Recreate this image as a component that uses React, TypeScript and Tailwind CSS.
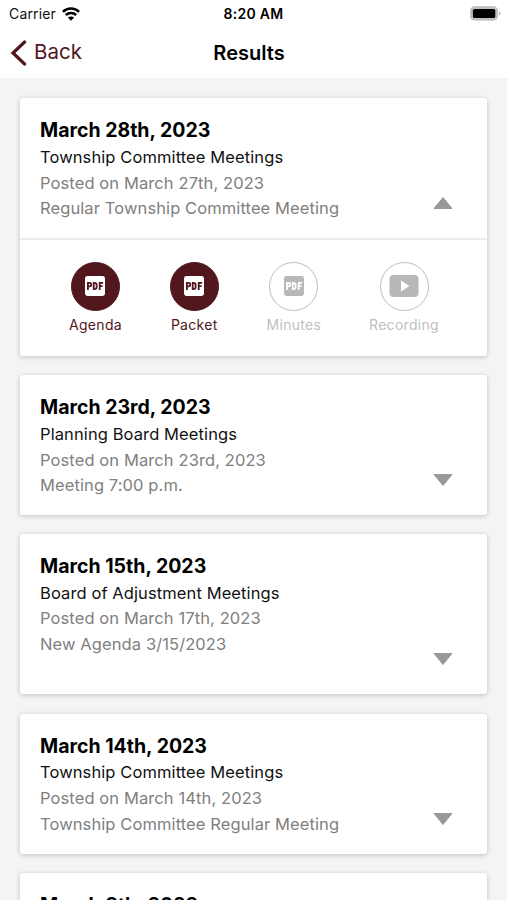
import React from 'react';

interface Meeting {
  date: string;
  committee: string;
  posted: string;
  title: string;
  expanded?: boolean;
  size: string;
}

const meetings: Meeting[] = [
  {
    date: 'March 28th, 2023',
    committee: 'Township Committee Meetings',
    posted: 'Posted on March 27th, 2023',
    title: 'Regular Township Committee Meeting',
    expanded: true,
    size: 'h-[258px]',
  },
  {
    date: 'March 23rd, 2023',
    committee: 'Planning Board Meetings',
    posted: 'Posted on March 23rd, 2023',
    title: 'Meeting 7:00 p.m.',
    size: 'h-[139.5px]',
  },
  {
    date: 'March 15th, 2023',
    committee: 'Board of Adjustment Meetings',
    posted: 'Posted on March 17th, 2023',
    title: 'New Agenda 3/15/2023',
    size: 'h-[160.5px]',
  },
  {
    date: 'March 14th, 2023',
    committee: 'Township Committee Meetings',
    posted: 'Posted on March 14th, 2023',
    title: 'Township Committee Regular Meeting',
    size: 'h-[140px]',
  },
  {
    date: 'March 8th, 2023',
    committee: 'Township Committee Meetings',
    posted: 'Posted on March 8th, 2023',
    title: 'Regular Township Committee Meeting',
    size: 'h-[140px]',
  },
];

const WifiIcon: React.FC = () => (
  <svg width="18" height="14" viewBox="0 0 18 14" fill="none" stroke="#000" strokeWidth="2.5">
    <path d="M0.9 4.9C5.4 0.5 12.6 0.5 17.1 4.9" />
    <path d="M3.8 8C6.7 5.2 11.3 5.2 14.2 8" />
    <path d="M9 13.8L5.9 10.6C7.6 9 10.4 9 12.1 10.6Z" fill="#000" stroke="none" />
  </svg>
);

const BatteryIcon: React.FC = () => (
  <svg width="31" height="15" viewBox="0 0 31 15">
    <rect x="0.9" y="0.9" width="26.2" height="13" rx="3.6" fill="#c4c4c4" stroke="#b8b8b8" strokeWidth="1.4" />
    <rect x="2.9" y="3" width="22.4" height="9" rx="1.6" fill="#000" />
    <path d="M28.9 5.2C31 6 31 8.8 28.9 9.6Z" fill="#b4b4b4" />
  </svg>
);

const Arrow: React.FC<{ up?: boolean }> = ({ up }) => (
  <svg width="20" height="14" viewBox="0 0 20 14" className={up ? '' : 'rotate-180'}>
    <path d="M10 1.5L19 12.5H1Z" fill="#999" stroke="#999" strokeWidth="1" strokeLinejoin="round" />
  </svg>
);

const PdfIcon: React.FC = () => (
  <svg width="22" height="22" viewBox="0 0 22 22">
    <rect x="1" y="1" width="20" height="20" rx="2.4" fill="currentColor" />
    <g fill="none" strokeWidth="1.8" className="stroke-(--letter)">
      <path d="M3.9 15V7.8H5.6Q7.2 7.8 7.2 9.5Q7.2 11.4 5.6 11.4H4" />
      <path d="M9.7 7.8V14.1H10.5Q12.6 14.1 12.6 12.3V9.6Q12.6 7.8 10.5 7.8Z" />
      <path d="M15.7 15V7.8H19.2M15.7 11.2H18.6" />
    </g>
  </svg>
);

const VideoIcon: React.FC = () => (
  <svg width="30" height="22" viewBox="0 0 30 22">
    <rect x="0.5" y="0" width="29" height="22" rx="4" fill="currentColor" />
    <path d="M12 5.6L20.4 11L12 16.4Z" fill="#fff" />
  </svg>
);

const Action: React.FC<{ label: string; active?: boolean; video?: boolean }> = ({ label, active, video }) => (
  <div className={`flex flex-col items-center ${active ? 'text-[#51171d]' : 'text-[#c0c0c0]'}`}>
    <div
      className={`flex size-[49px] items-center justify-center rounded-full border ${
        active ? 'border-[#51171d] bg-[#51171d] text-white [--letter:#51171d]' : 'border-[#bdbdbd] bg-white text-[#b8b8b8] [--letter:#fff]'
      }`}
    >
      {video ? <VideoIcon /> : <PdfIcon />}
    </div>
    <span className="mt-[4px] text-[14px] leading-[20px] tracking-[0.3px]">{label}</span>
  </div>
);

const MeetingCard: React.FC<{ meeting: Meeting }> = ({ meeting }) => (
  <div className={`flex shrink-0 flex-col rounded-[3px] bg-white shadow-[0_1px_5px_rgba(0,0,0,0.22)] ${meeting.size}`}>
    <div className={`flex justify-between pl-5 pr-[34px] pt-[18px] ${meeting.expanded ? 'h-[140px]' : 'flex-1'}`}>
      <div className="whitespace-nowrap text-[16.5px] leading-[25.7px] tracking-[0.1px] text-[#808080]">
        <h2 className="mb-[0.8px] text-[19.5px] font-bold leading-[28px] tracking-normal text-black">{meeting.date}</h2>
        <p className="text-[#111]">{meeting.committee}</p>
        <p>{meeting.posted}</p>
        <p>{meeting.title}</p>
      </div>
      <div className="flex items-end pb-[28px]">
        <Arrow up={meeting.expanded} />
      </div>
    </div>
    {meeting.expanded && (
      <div className="flex flex-1 justify-between border-t-2 border-[#ebebeb] pl-[49px] pr-12 pt-[21.5px]">
        <Action label="Agenda" active />
        <Action label="Packet" active />
        <Action label="Minutes" />
        <Action label="Recording" video />
      </div>
    )}
  </div>
);

export default function App() {
  return (
    <div className="flex h-[900px] w-[507px] flex-col overflow-hidden bg-[#f4f4f4] font-['Inter','Liberation_Sans',sans-serif]">
      <header className="h-[78px] shrink-0 bg-white">
        <div className="grid h-[27px] grid-cols-3 items-center pl-[9px] pr-[6px] text-[14px] text-[#111]">
          <div className="flex items-center gap-[6px]">
            <span className="tracking-[0.15px]">Carrier</span>
            <WifiIcon />
          </div>
          <span className="-ml-[3px] text-center font-semibold tracking-[0.25px] text-black">8:20 AM</span>
          <div className="flex justify-end">
            <BatteryIcon />
          </div>
        </div>
        <div className="grid h-[51px] grid-cols-3 items-center pl-[10px] pr-[10px]">
          <div className="flex items-center gap-[7px] text-[#51171d]">
            <svg width="17" height="26" viewBox="0 0 17 26" fill="none" stroke="currentColor" strokeWidth="3.2" strokeLinecap="round">
              <path d="M14.6 2L3 13L14.6 24" />
            </svg>
            <span className="text-[20.5px]">Back</span>
          </div>
          <h1 className="-ml-[9px] text-center text-[20px] font-semibold text-black">Results</h1>
        </div>
      </header>
      <main className="flex flex-col gap-[19.2px] px-5 pt-5">
        {meetings.map((meeting) => (
          <MeetingCard key={meeting.date} meeting={meeting} />
        ))}
      </main>
    </div>
  );
}
